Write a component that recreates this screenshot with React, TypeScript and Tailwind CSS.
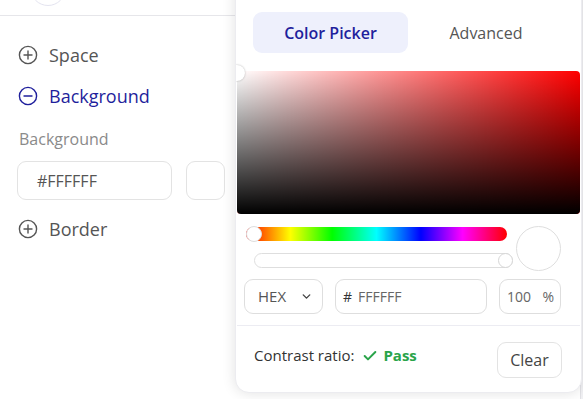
import React from 'react';
import { ChevronDown, Check } from 'lucide-react';

const font = { fontFamily: '"Open Sans", Lato, sans-serif' };

const PlusCircle = ({ minus = false, color = '#555' }: { minus?: boolean; color?: string }) => (
  <svg width="20" height="20" viewBox="0 0 20 20" fill="none" stroke={color} strokeWidth="1.4" strokeLinecap="round">
    <circle cx="10" cy="10" r="8.6" />
    <line x1="6" y1="10" x2="14" y2="10" />
    {!minus && <line x1="10" y1="6" x2="10" y2="14" />}
  </svg>
);

const Section = ({ label, open = false }: { label: string; open?: boolean }) => (
  <div className="flex items-center gap-[11px] h-[24px]">
    <PlusCircle minus={open} color={open ? '#1f1f9c' : '#555'} />
    <span className={`text-[18px] ${open ? 'text-[#1f1f9c]' : 'text-[#555]'}`}>{label}</span>
  </div>
);

export default function App() {
  return (
    <div className="relative w-[583px] h-[399px] overflow-hidden bg-white" style={font}>
      {/* sidebar behind */}
      <div className="w-[583px]">
        <div className="h-[16px] border-b border-[#e6e6ea] relative">
          <div className="absolute left-[30px] top-[-30px] w-[36px] h-[36px] rounded-full border border-[#e4e4f0]" />
        </div>
        <div className="pl-[18px] pt-[27px] w-[235px]">
          <Section label="Space" />
          <div className="mt-[17px]">
            <Section label="Background" open />
          </div>
          <div className="mt-[20px] text-[16px] text-[#8a8a8a] font-medium pl-px leading-[22px]">Background</div>
          <div className="mt-[11px] flex gap-[14px] -ml-px">
            <div className="w-[155px] h-[39px] rounded-[9px] border border-[#e3e3e3] flex items-center pl-[19px] text-[16px] text-[#555]">
              #FFFFFF
            </div>
            <div className="w-[39px] h-[39px] rounded-[9px] border border-[#e3e3e3] bg-white" />
          </div>
          <div className="mt-[17px]">
            <Section label="Border" />
          </div>
        </div>
      </div>

      {/* page edge on the right */}
      <div className="absolute right-0 top-0 w-[3px] h-full bg-[#f1f1f4] border-l border-[#e2e2e6]" />

      {/* color picker popover */}
      <div className="absolute left-[235px] top-[-20px] w-[347px] h-[413px] bg-white rounded-[14px] border border-[#ececf0] shadow-[0_0_14px_rgba(0,0,0,0.12)] overflow-hidden flex flex-col">
        <div className="pt-[31px] px-[17px] flex">
          <div className="w-[155px] h-[41px] rounded-[9px] bg-[#eef0fc] flex items-center justify-center text-[16px] font-semibold text-[#1f1f9c]">
            Color Picker
          </div>
          <div className="flex-1 h-[41px] flex items-center justify-center text-[16px] text-[#555]">Advanced</div>
        </div>

        <div className="relative mt-[18px] mx-px h-[143px] rounded-[4px] overflow-hidden bg-[#ff0000]">
          <div className="absolute inset-0 bg-gradient-to-r from-white to-transparent" />
          <div className="absolute inset-0 bg-gradient-to-b from-transparent to-black" />
        </div>
        <div className="absolute left-[-7px] top-[84px] w-[16px] h-[16px] rounded-full bg-white shadow-[0_0_2px_rgba(0,0,0,0.3)]" />

        <div className="flex pl-[10px] pr-[20px] pt-[12px] gap-[9px]">
          <div className="flex-1 pt-[1px]">
            <div className="relative h-[14px] rounded-full bg-[linear-gradient(to_right,#ff0000,#ffff00_17%,#00ff00_33%,#00ffff_50%,#0000ff_67%,#ff00ff_83%,#ff0000)]">
              <div className="absolute left-0 top-[-1px] w-[16px] h-[16px] rounded-full bg-white border border-[#ddd]" />
            </div>
            <div className="relative mt-[12px] ml-[8px] mr-[-6px] h-[15px] rounded-full border border-[#dedede] bg-white">
              <div className="absolute right-[-1px] top-[-1px] w-[15px] h-[15px] rounded-full bg-white border border-[#d6d6d6]" />
            </div>
          </div>
          <div className="w-[45px] h-[45px] rounded-full border border-[#dedede] bg-white shrink-0" />
        </div>

        <div className="flex pl-[8px] pt-[8px] gap-[12px]">
          <div className="w-[79px] h-[35px] rounded-[9px] border border-[#dedede] flex items-center pl-[13px] pr-[9px] justify-between text-[15px] text-[#555]">
            HEX
            <ChevronDown size={13} strokeWidth={2.6} color="#444" />
          </div>
          <div className="w-[152px] h-[35px] rounded-[9px] border border-[#dedede] flex items-center pl-[7px] text-[14px] text-[#666]">
            <span className="text-[#333] mr-[6px]">#</span>FFFFFF
          </div>
          <div className="w-[62px] h-[35px] rounded-[9px] border border-[#dedede] flex items-center pl-[7px] pr-[6px] justify-between text-[14px] text-[#666]">
            <span>100</span>
            <span>%</span>
          </div>
        </div>

        <div className="mt-[11px] mx-px border-t border-[#ececf2]" />

        <div className="flex items-center justify-between pl-[18px] pr-[19px] pt-[16px]">
          <div className="flex items-center text-[15px] text-[#333] -mt-[9px]">
            Contrast ratio:
            <Check size={16} strokeWidth={3} color="#2aa44a" className="ml-[8px] mr-[5px]" />
            <span className="font-bold text-[#2aa44a]">Pass</span>
          </div>
          <div className="w-[65px] h-[36px] rounded-[9px] border border-[#e3e3e3] flex items-center justify-center text-[16px] text-[#444]">
            Clear
          </div>
        </div>
      </div>
    </div>
  );
}
